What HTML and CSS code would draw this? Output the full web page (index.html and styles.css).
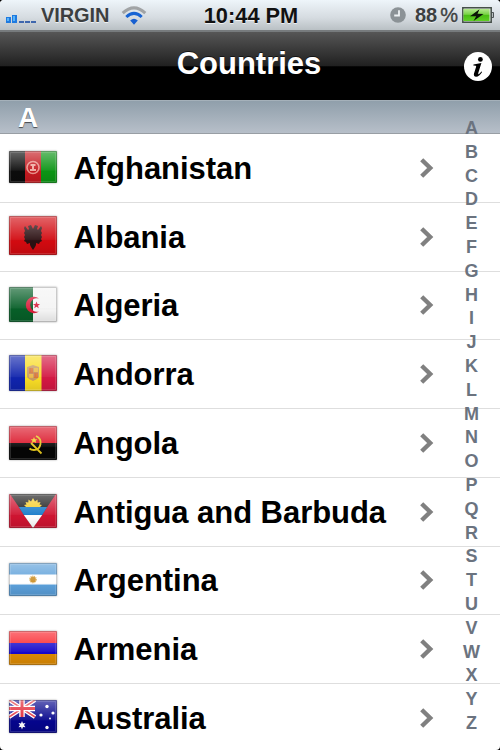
FILE: index.html
```html
<!DOCTYPE html>
<html lang="en">
<head>
    <meta charset="UTF-8">
    <meta name="viewport" content="width=device-width, initial-scale=1.0">
    <title>Countries</title>
    <link rel="stylesheet" href="styles.css">
</head>
<body>
    <div class="phone">
        <div class="status-bar">
            <div class="status-left">
                <svg class="signal" width="30" height="8" viewBox="0 0 30 8">
                    <path fill="#1e7ae0" d="M0 2h5v6H0zM6 0h5v8H6z"/>
                    <path fill="#58b4fa" d="M1 3h2v3H1zM7 1h2v5H7z"/>
                    <path fill="#3e66ad" d="M13 6h5v2h-5zM19 6h5v2h-5zM25 6h5v2h-5z"/>
                </svg>
                <span class="carrier">VIRGIN</span>
                <svg class="wifi" width="26" height="20" viewBox="0 0 26 20">
                    <path d="M1.7 7.2Q13-3.5 24.3 7.2" fill="none" stroke="#a0a3a5" stroke-width="3"/>
                    <path d="M5.3 11Q13 3.6 20.7 11" fill="none" stroke="#1764d4" stroke-width="3"/>
                    <path d="M9.2 14.6Q13 11 16.8 14.6L13 18.7z" fill="#175fd0"/>
                </svg>
            </div>
            <div class="time">10:44 PM</div>
            <div class="status-right">
                <svg class="clock" width="16" height="16" viewBox="0 0 16 16">
                    <circle cx="8" cy="8" r="7.8" fill="#8b9296"/>
                    <path d="M9 3.2V8.5H4.2" fill="none" stroke="#eef2f4" stroke-width="1.8"/>
                </svg>
                <span class="percent">88<i>%</i></span>
                <svg class="battery" width="33" height="16" viewBox="0 0 33 16">
                    <defs>
                        <linearGradient id="charge" x1="0" y1="0" x2="0" y2="1">
                            <stop offset="0" stop-color="#b5e990"/>
                            <stop offset=".45" stop-color="#79d346"/>
                            <stop offset=".5" stop-color="#49bd12"/>
                            <stop offset="1" stop-color="#5fcf25"/>
                        </linearGradient>
                    </defs>
                    <path d="M29 5.500h2.500v5H29z" fill="#b9c0c2" stroke="#4d5355"/>
                    <path d="M.8.8h28.400v14.400H.8z" fill="#dfe8df" stroke="#46504a" stroke-width="1.500"/>
                    <path d="M1.500 2h26v12h-26z" fill="url(#charge)"/>
                    <path d="M17.500 2.200L8 9.200l6.200.1-2.700 4.600L21.500 7l-6-.2z" fill="#0b1607"/>
                </svg>
            </div>
        </div>

        <div class="nav-bar">
            <h1>Countries</h1>
            <svg class="info" width="28" height="29" viewBox="0 0 28 29">
                <ellipse cx="14" cy="14.500" rx="14" ry="14.500" fill="#fff"/>
                <circle cx="16.400" cy="7.400" r="2.400"/>
                <path d="M9.500 12.400Q13.300 11.900 17.400 11.100L14.300 21Q13.900 22.700 15 22Q16.200 21.100 17.300 19.400L18.100 20Q15.200 24.700 12.100 24.700Q9.200 24.600 10 21.500L12.200 14.500Q12.500 13.300 9.300 13.400z"/>
            </svg>
        </div>

        <div class="section-header">A</div>

        <ul class="country-list">
            <li>
                <svg class="flag" width="48" height="32" viewBox="0 0 48 32">
                    <path fill="#0c0c0c" d="M0 0h16v32H0z"/>
                    <path fill="#c41a20" d="M16 0h16v32H16z"/>
                    <path fill="#0b9414" d="M32 0h16v32H32z"/>
                    <circle cx="24" cy="16.500" r="6" fill="none" stroke="#e9928a" stroke-width="1.600"/>
                    <path d="M21.500 13h5v2h-1.500v3h2v2h-6v-2h2v-3h-1.500z" fill="#efaaa0"/>
                </svg>
                <span class="name">Afghanistan</span>
            </li>
            <li>
                <svg class="flag" width="48" height="39" viewBox="0 0 48 39">
                    <path fill="#d20a10" d="M0 0h48v39H0z"/>
                    <path fill="#2b1012" d="M23 11l-1-2-3 1 1 3-1 1-3-4-1 2 1 3-1 2 1 2-1 2 1 2-1 2 2 1 1 2 3-1v2l1 2 2 3 2-3 1-2v-2l3 1 1-2 2-1-1-2 1-2-1-2 1-2-1-2 1-3-1-2-3 4-1-1 1-3-3-1-1 2-1 2z"/>
                </svg>
                <span class="name">Albania</span>
            </li>
            <li>
                <svg class="flag" width="48" height="35" viewBox="0 0 48 35">
                    <path fill="#075f28" d="M0 0h24v35H0z"/>
                    <path fill="#f4f4f4" d="M24 0h24v35H24z"/>
                    <path fill="#d9203d" d="M30 11.500a8.200 8.200 0 1 0 0 13a6.800 6.800 0 1 1 0-13zM27.500 14.500l1 2.500h2.500l-2 1.700.8 2.600-2.300-1.500-2.300 1.500.8-2.600-2-1.700h2.500z"/>
                </svg>
                <span class="name">Algeria</span>
            </li>
            <li>
                <svg class="flag" width="48" height="36" viewBox="0 0 48 36">
                    <path fill="#1024ad" d="M0 0h16v36H0z"/>
                    <path fill="#f8dc25" d="M16 0h17v36H16z"/>
                    <path fill="#d31843" d="M32.500 0H48v36H32.500z"/>
                    <path fill="#c69b61" d="M18 12l3-1 3-1 3 1 3 1v10l-2 2-4 2-4-2-2-2z"/>
                    <path fill="#dc7735" d="M20 13h4v5h-4zM25 18h4v5h-4z"/>
                    <path fill="#e9b743" d="M25 13h4v4h-4zM20 19h4v4h-4z"/>
                    <path fill="none" stroke="#cb7040" d="M21.500 13v4M26.500 18v4M20 18h9"/>
                </svg>
                <span class="name">Andorra</span>
            </li>
            <li>
                <svg class="flag low" width="48" height="34" viewBox="0 0 48 34">
                    <path fill="#db1528" d="M0 0h48v17H0z"/>
                    <path fill="#050505" d="M0 17h48v17H0z"/>
                    <path d="M27 10q5.500 2.500 4.500 8-1 6-6.500 6-3 0-4.500-1.500M22 17l10.500 10.500" fill="none" stroke="#e3c51e" stroke-width="1.800"/>
                    <path fill="#f0cf25" d="M25 11l1 2.200h2.300l-1.700 1.500.6 2.300-2.200-1.300-2.200 1.300.6-2.300-1.700-1.500H24z"/>
                </svg>
                <span class="name">Angola</span>
            </li>
            <li>
                <svg class="flag" width="48" height="34" viewBox="0 0 48 34">
                    <path fill="#cf1431" d="M0 0h48v34H0z"/>
                    <path fill="#1b1b1b" d="M1 0h46L24 34z"/>
                    <path fill="#167ac9" d="M9.800 13h28.400l-5 8H14.800z"/>
                    <path fill="#fff" d="M14.800 21h18.400L24 34z"/>
                    <path fill="#f7ce2b" d="M17 13l-2-2 2.500-.5-1-2.500 2.800.5.2-3 2.500 2L24 4l2 3.500 2.500-2 .2 3 2.800-.5-1 2.500 2.500.5-2 2z"/>
                </svg>
                <span class="name">Antigua and Barbuda</span>
            </li>
            <li>
                <svg class="flag" width="48" height="33" viewBox="0 0 48 33">
                    <path fill="#5b9fd9" d="M0 0h48v33H0z"/>
                    <path fill="#fff" d="M0 11.500h48v10H0z"/>
                    <circle cx="24" cy="16.500" r="2.900" fill="#c98d25"/>
                    <circle cx="24" cy="16.500" r="3.300" fill="none" stroke="#d9a94f" stroke-width="1.200" stroke-dasharray="1 .8"/>
                </svg>
                <span class="name">Argentina</span>
            </li>
            <li>
                <svg class="flag" width="48" height="34" viewBox="0 0 48 34">
                    <path fill="#fa2028" d="M0 0h48v12H0z"/>
                    <path fill="#1507cb" d="M0 12h48v11H0z"/>
                    <path fill="#dc8a03" d="M0 23h48v11H0z"/>
                </svg>
                <span class="name">Armenia</span>
            </li>
            <li>
                <svg class="flag" width="48" height="33" viewBox="0 0 48 33">
                    <path fill="#05058c" d="M0 0h48v33H0z"/>
                    <path d="M0 0l26 17M26 0L0 17" stroke="#fff" stroke-width="4"/>
                    <path d="M0 0l26 17M26 0L0 17" stroke="#e4333d" stroke-width="1.500"/>
                    <path d="M13 0v17M0 8.500h26" stroke="#fff" stroke-width="5.500"/>
                    <path d="M13 0v17M0 8.500h26" stroke="#e21e2d" stroke-width="3"/>
                    <g fill="#fff">
                        <path d="M13 21l1 2.500 2.500-.5-1.500 2 1.500 2.200-2.500-.2-1 2.500-1-2.500-2.500.2L11 25l-1.500-2 2.500.5z"/>
                        <circle cx="38" cy="6.500" r="1.700"/>
                        <circle cx="32" cy="15" r="1.600"/>
                        <circle cx="44" cy="13" r="1.600"/>
                        <circle cx="41" cy="18.500" r=".9"/>
                        <circle cx="38" cy="27.500" r="1.700"/>
                    </g>
                </svg>
                <span class="name">Australia</span>
            </li>
        </ul>

        <div class="index">
            <span>A</span><span>B</span><span>C</span><span>D</span><span>E</span><span>F</span><span>G</span>
            <span>H</span><span>I</span><span>J</span><span>K</span><span>L</span><span>M</span><span>N</span>
            <span>O</span><span>P</span><span>Q</span><span>R</span><span>S</span><span>T</span><span>U</span>
            <span>V</span><span>W</span><span>X</span><span>Y</span><span>Z</span>
        </div>
    </div>

    <script>
        // Every row gets the flag gloss and the arrow on the right
        document.querySelectorAll('.country-list li').forEach(row => {
            const flag = row.querySelector('.flag');
            const h = flag.viewBox.baseVal.height;
            flag.insertAdjacentHTML('beforeend',
                `<linearGradient id="gloss" x1="0" y1="0" x2="0" y2="1">
                    <stop offset="0" stop-color="#fff" stop-opacity=".38"/>
                    <stop offset=".6" stop-color="#fff" stop-opacity=".06"/>
                    <stop offset=".65" stop-color="#000" stop-opacity="0"/>
                    <stop offset="1" stop-color="#000" stop-opacity=".1"/>
                </linearGradient>
                <rect width="48" height="${h}" fill="url(#gloss)"/>
                <rect x="1.500" y="1.500" width="45" height="${h - 3}" fill="none" stroke="#fff" stroke-opacity=".14"/>
                <rect x=".5" y=".5" width="47" height="${h - 1}" fill="none" stroke="#444" stroke-opacity=".25"/>`);
            row.insertAdjacentHTML('beforeend',
                `<svg class="arrow" width="14" height="20" viewBox="0 0 14 20">
                    <path d="M1.700 1.700L10.200 10L1.700 18.300" fill="none" stroke="#808080" stroke-width="4.400"/>
                </svg>`);
        });
    </script>
</body>
</html>
```

FILE: styles.css
```css
body {
    margin: 0;
    background: #000;
    font-family: "Liberation Sans", Arial, sans-serif;
    font-weight: bold;
    overflow: hidden;
}

.phone {
    position: relative;
    width: 500px;
    height: 750px;
    background: #fff;
    border-radius: 4px;
    overflow: hidden;
}

/* Status bar */
.status-bar {
    display: grid;
    grid-template-columns: 1fr auto 1fr;
    align-items: center;
    box-sizing: border-box;
    height: 30px;
    padding: 0 5px 0 6px;
    background: linear-gradient(#eef5fa, #d5dbe0 60%, #b9c0c4);
    font-size: 20px;
    color: #3c3f41;
    text-shadow: 0 1px 0 rgba(255, 255, 255, 0.7);
}

.status-left,
.status-right {
    display: flex;
    align-items: center;
}

.status-right {
    justify-content: flex-end;
}

.signal {
    margin-top: 8px;
}

.carrier {
    margin: 1px 0 0 5px;
    letter-spacing: -0.100px;
}

.wifi {
    margin: 1px 0 0 12px;
}

.time {
    padding: 1px 0 0 1px;
    font-size: 21.800px;
    color: #111;
}

.clock {
    margin-right: 9px;
}

.percent {
    padding-top: 1px;
}

.percent i {
    margin-left: 3px;
    font-style: normal;
    font-weight: normal;
    -webkit-text-stroke: 0.4px #3c3f41;
}

.battery {
    margin-left: 4px;
}

/* Title bar */
.nav-bar {
    display: grid;
    grid-template-columns: 1fr auto 1fr;
    align-items: center;
    box-sizing: border-box;
    height: 70px;
    padding: 0 8px;
    border-top: 2px solid #777b7d;
    background: linear-gradient(#565656, #202020 50%, #000 51%);
}

.nav-bar h1 {
    grid-column: 2;
    margin: 0 2px 4px 0;
    font-size: 31px;
    line-height: 36px;
    color: #fff;
    text-shadow: 0 -1px 0 rgba(0, 0, 0, 0.6);
}

.info {
    justify-self: end;
}

.section-header {
    box-sizing: border-box;
    height: 34px;
    padding-left: 18px;
    border-top: 1px solid #a5b1ba;
    border-bottom: 1px solid #989ea4;
    background: linear-gradient(#909fab, #b7bfc9);
    font-size: 28px;
    line-height: 34px;
    color: #fff;
    text-shadow: 0 1px 1px rgba(0, 0, 0, 0.6);
}

/* Countries */
.country-list {
    margin: 0;
    padding: 0;
    list-style: none;
}

.country-list li {
    display: flex;
    align-items: center;
    box-sizing: border-box;
    height: 68.750px;
    padding: 0 66px 0 9px;
    border-bottom: 1px solid #dedede;
}

.flag {
    margin-bottom: 2px;
    border-radius: 1px;
    box-shadow: 0 0 2px rgba(0, 0, 0, 0.4);
}

.flag.low {
    margin-bottom: 0;
}

.name {
    flex: 1;
    margin-left: 16.500px;
    padding-top: 2px;
    font-size: 31px;
    letter-spacing: -0.050px;
    color: #000;
    white-space: nowrap;
}

/* Letters over the right edge of the list */
.index {
    position: absolute;
    top: 117px;
    right: 16px;
    width: 25px;
    display: flex;
    flex-direction: column;
    font-size: 18px;
    line-height: 23.800px;
    text-align: center;
    color: #6b737f;
}
```
